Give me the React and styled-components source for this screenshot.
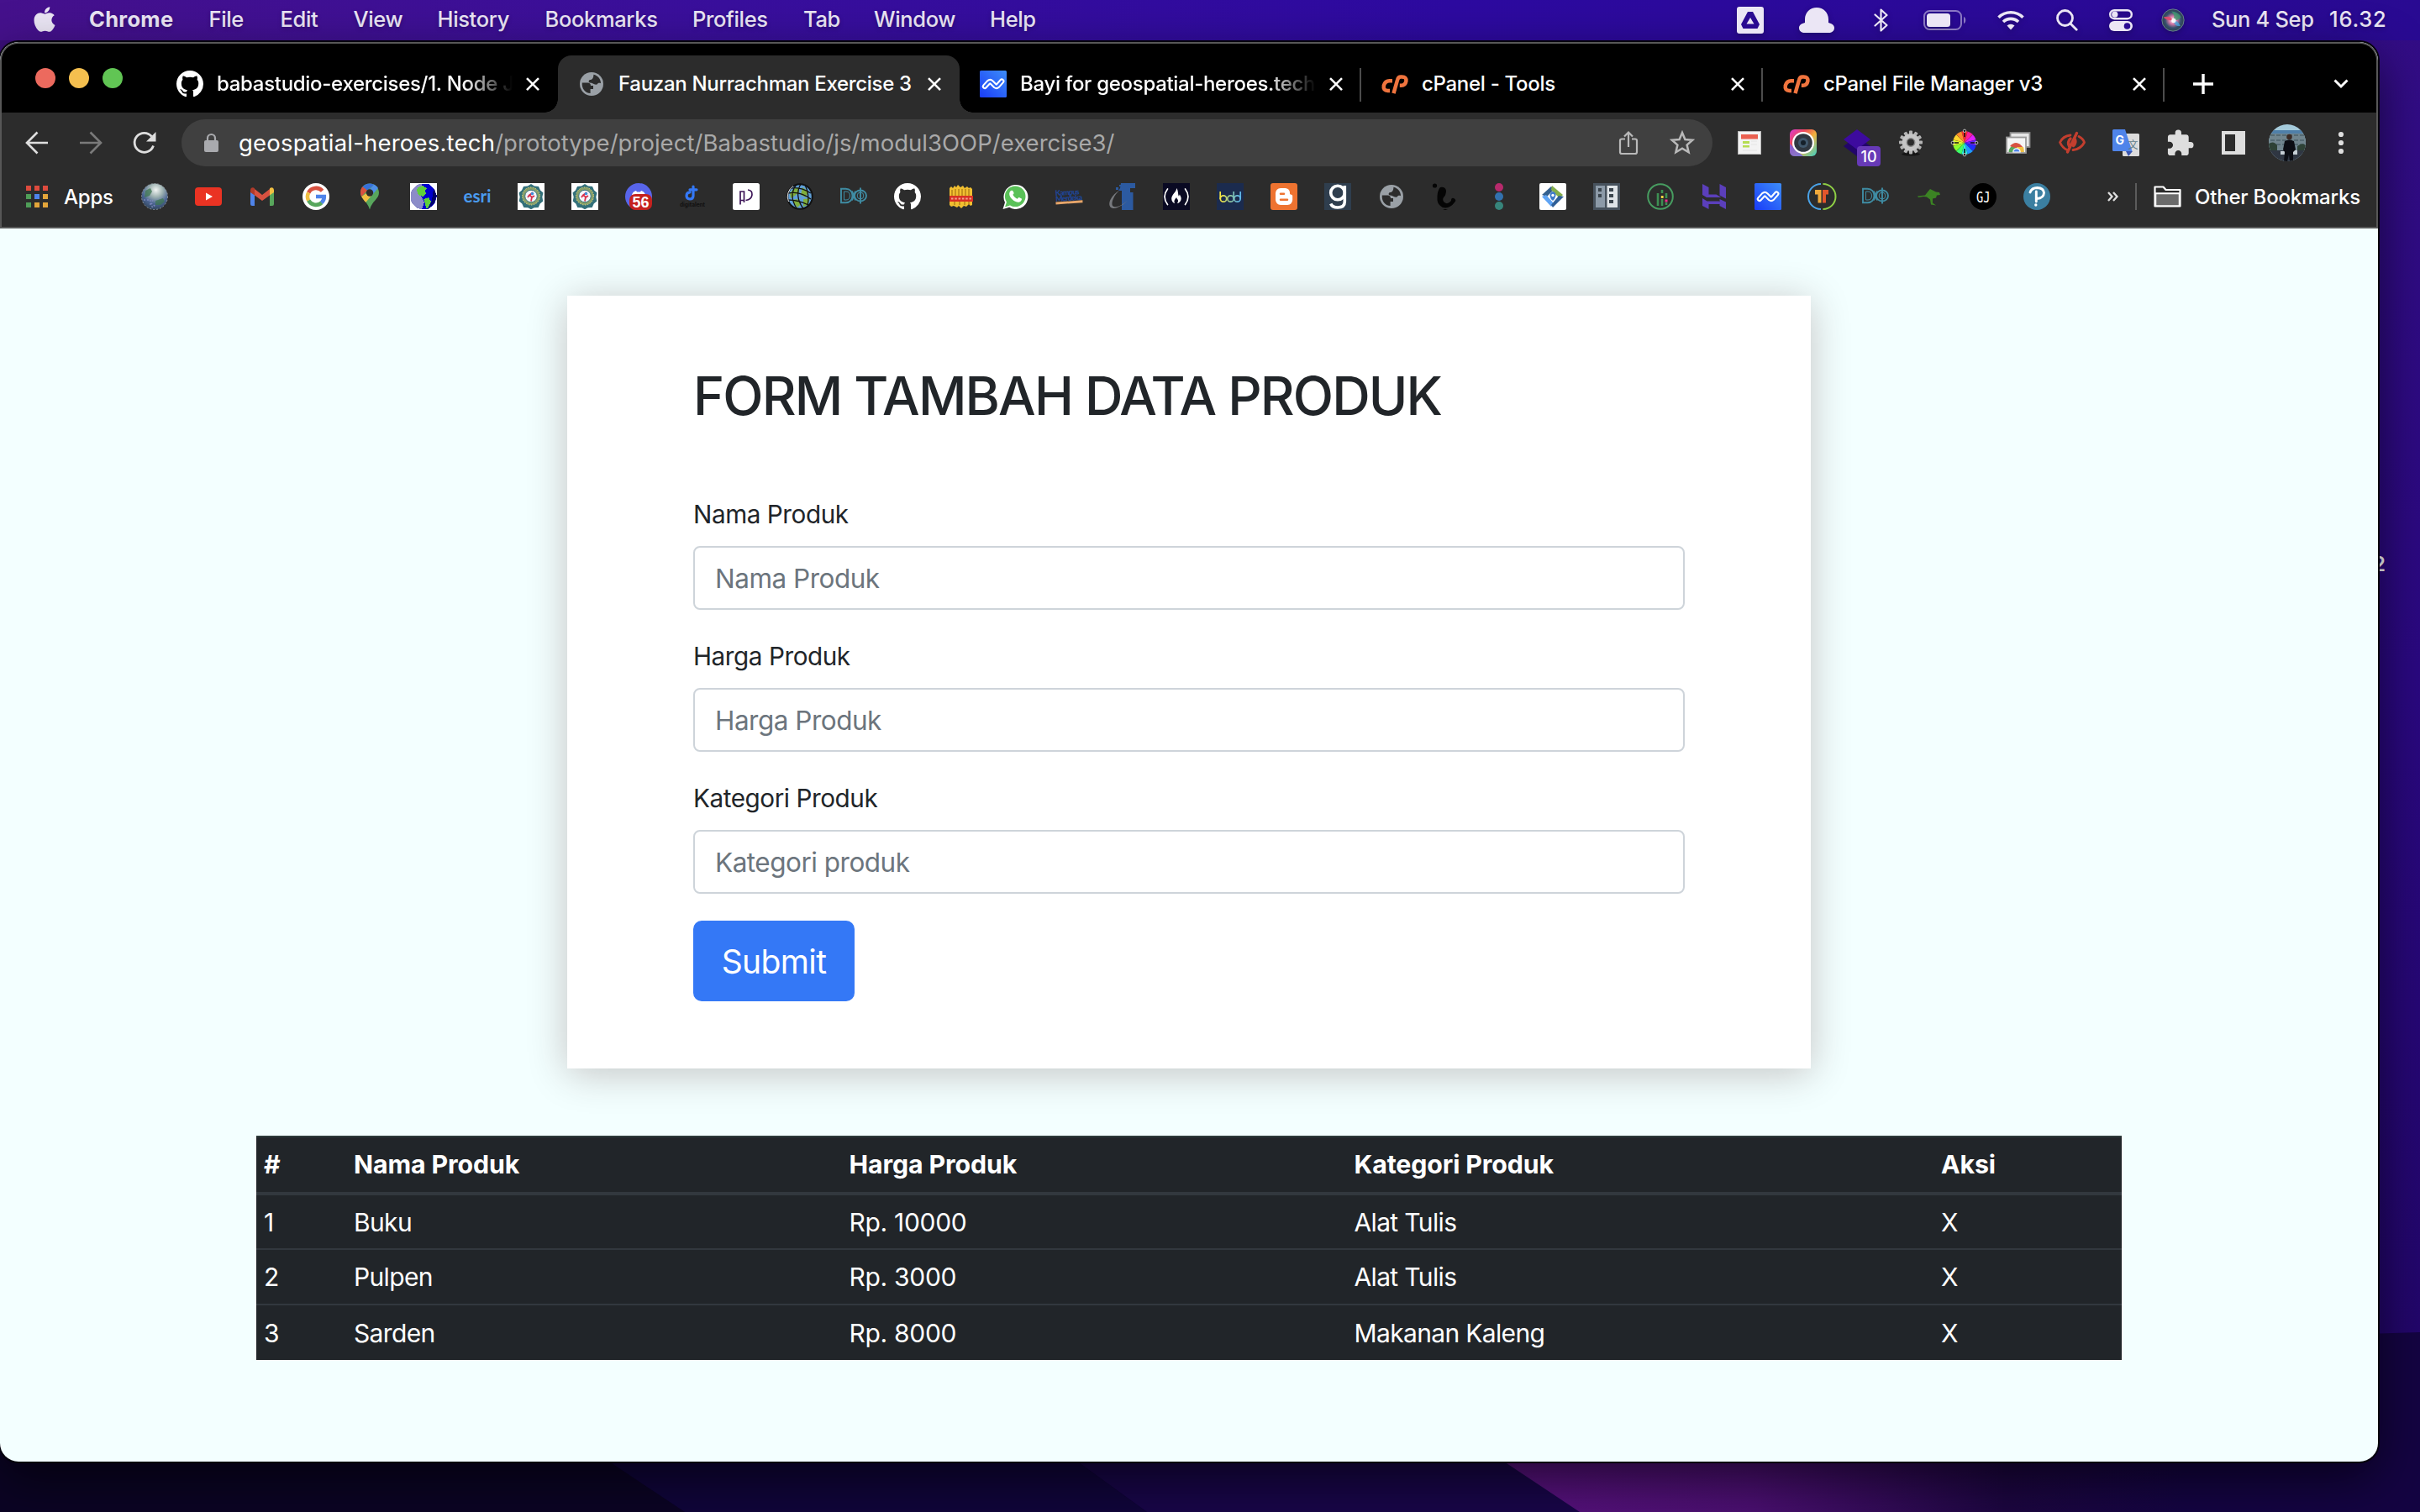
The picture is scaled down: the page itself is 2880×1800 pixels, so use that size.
import React from "react";
import styled, { createGlobalStyle, css } from "styled-components";
import { FaApple } from "react-icons/fa";
import { MdExtension } from "react-icons/md";

const GlobalStyle = createGlobalStyle`
  *, *::before, *::after { box-sizing: border-box; }
  body {
    margin: 0;
    background: #08021a;
    font-family: Inter, "Liberation Sans", sans-serif;
  }
  svg { display: block; overflow: visible; }
`;

/* ---------- desktop ---------- */

const Desktop = styled.div`
  position: relative;
  isolation: isolate;
  display: flex;
  flex-direction: column;
  width: 2880px;
  height: 1800px;
  overflow: hidden;
`;

const Wallpaper = styled.svg`
  position: absolute;
  inset: 0;
  z-index: -2;
`;

const DesktopFileLabel = styled.span`
  position: absolute;
  z-index: -1;
  left: 2824px;
  top: 657px;
  font-size: 24px;
  font-weight: 600;
  color: #fff;
`;

/* ---------- menu bar ---------- */

const MenuBar = styled.header`
  display: flex;
  align-items: center;
  justify-content: space-between;
  height: 48px;
  padding: 0 37px 3px 39px;
  flex: none;
  color: #ebe6f5;
  background: linear-gradient(90deg, #45118c 0%, #390f9c 30%, #2d0aa0 60%, #290a92 100%);
  font-size: 25.5px;
  font-weight: 500;
`;

const MenuGroup = styled.nav`
  display: flex;
  align-items: center;
  height: 100%;
`;

const AppleLogo = styled(FaApple)`
  width: 28px;
  height: 34px;
  margin-right: 39px;
`;

const MenuItem = styled.span`
  width: ${(p) => p.$w}px;
  white-space: pre;
  letter-spacing: ${(p) => p.$ls ?? -0.35}px;
  font-weight: ${(p) => (p.$app ? 700 : 500)};
  text-shadow: 0 2px 5px rgba(0, 0, 0, 0.25);
`;

const StatusSlot = styled.span`
  display: flex;
  width: ${(p) => p.$w}px;
  padding-top: 3px;
  filter: drop-shadow(0 2px 3px rgba(0, 0, 0, 0.25));
`;

/* ---------- browser window ---------- */

const Window = styled.main`
  display: flex;
  flex-direction: column;
  width: 2830px;
  height: 1690px;
  margin-top: 2px;
  flex: none;
  border-radius: 22px;
  overflow: hidden;
  background: #f3ffff;
  box-shadow: 0 0 0 2px #05020c, 0 20px 60px rgba(0, 0, 0, 0.6);
`;

const BrowserChrome = styled.div`
  display: flex;
  flex-direction: column;
  flex: none;
  height: 222px;
  border: 2px solid #575757;
  border-radius: 22px 22px 0 0;
  background: #2c2c2c;
  overflow: hidden;
`;

const TabStrip = styled.div`
  display: flex;
  align-items: center;
  height: 82px;
  flex: none;
  padding-left: 40px;
  background: #000;
`;

const TrafficLights = styled.div`
  display: flex;
  gap: 16px;
  width: 144px;
`;

const Light = styled.i`
  width: 24px;
  height: 24px;
  border-radius: 50%;
  background: ${(p) => p.$color};
`;

const flare = css`
  content: "";
  position: absolute;
  bottom: 0;
  width: 16px;
  height: 16px;
`;

const Tab = styled.div`
  position: relative;
  display: flex;
  align-items: center;
  align-self: flex-end;
  width: 478px;
  height: 68px;
  padding: 0 22px 0 24px;
  color: #fff;
  ${(p) =>
    p.$active &&
    css`
      background: #2c2c2c;
      border-radius: 16px 16px 0 0;
      &::before {
        ${flare}
        left: -16px;
        background: radial-gradient(circle at 0 0, transparent 15.5px, #2c2c2c 16px);
      }
      &::after {
        ${flare}
        right: -16px;
        background: radial-gradient(circle at 100% 0, transparent 15.5px, #2c2c2c 16px);
      }
    `}
`;

const TabTitle = styled.span`
  flex: 1;
  min-width: 0;
  margin: 0 8px 0 16px;
  white-space: nowrap;
  font-size: 24px;
  line-height: 32px;
  font-weight: 500;
  letter-spacing: -0.3px;
  ${(p) => p.$fade && "mask-image: linear-gradient(90deg, #000 calc(100% - 66px), transparent calc(100% - 8px));"}
`;

const TabDivider = styled.i`
  align-self: flex-end;
  width: 2px;
  height: 40px;
  margin: 0 0 13px -2px;
  background: #4c4c4c;
`;

const NewTab = styled.span`
  margin-left: 34px;
`;

const TabSearch = styled.span`
  margin-left: auto;
  margin-right: 33px;
`;

const StripIcon = styled.div`
  display: flex;
  flex: 1;
  align-items: center;
  padding-top: 14px;
`;

const Toolbar = styled.div`
  display: flex;
  align-items: center;
  height: 72px;
  flex: none;
  padding: 0 10px;
`;

const Cell = styled.span`
  position: relative;
  display: flex;
  justify-content: center;
  width: 64px;
  flex: none;
`;

const AddressBar = styled.div`
  display: flex;
  align-items: center;
  flex: 1;
  height: 56px;
  margin: 0 12px;
  padding: 0 21px 0 27px;
  border-radius: 28px;
  background: #404040;
  color: #a9a9a9;
  font-size: 27.5px;
`;

const Url = styled.span`
  flex: 1;
  margin-left: 24px;
  white-space: nowrap;
  letter-spacing: 0.03px;
`;

const UrlHost = styled.span`
  color: #fff;
  letter-spacing: 0.2px;
`;

const AddressActions = styled.div`
  display: flex;
  align-items: center;
  gap: 38px;
`;

const Badge = styled.span`
  position: absolute;
  left: 32px;
  top: 20px;
  width: 28px;
  height: 24px;
  border-radius: 4px;
  background: #673ab7;
  color: #fff;
  font-size: 18px;
  line-height: 25px;
  font-weight: 500;
  text-align: center;
`;

const BookmarkBar = styled.div`
  display: flex;
  align-items: center;
  height: 56px;
  flex: none;
  padding-left: 29px;
  color: #fff;
  font-size: 24px;
  font-weight: 500;
`;

const AppsLabel = styled.span`
  width: 76px;
  margin-left: 19px;
  letter-spacing: -0.2px;
`;

const MoreBookmarks = styled.span`
  width: 76px;
  padding-left: 52px;
`;

const BarDivider = styled.i`
  width: 2px;
  height: 32px;
  margin: 0 20px 0 9px;
  background: #5b5b5b;
`;

const FolderLabel = styled.span`
  margin-left: 16px;
  white-space: nowrap;
  letter-spacing: -0.2px;
`;

/* ---------- page ---------- */

const Page = styled.div`
  display: flex;
  flex-direction: column;
  align-items: center;
  padding-top: 80px;
  gap: 80px;
  color: #212529;
`;

const FormCard = styled.form`
  display: flex;
  flex-direction: column;
  align-items: flex-start;
  width: 1480px;
  height: 920px;
  padding: 80px 150px;
  background: #fff;
  box-shadow: 0 6px 44px rgba(44, 8, 8, 0.24);
`;

const FormTitle = styled.h2`
  margin: 0 0 79px;
  font-size: 63px;
  line-height: 78px;
  font-weight: 500;
  letter-spacing: -1.85px;
  white-space: nowrap;
`;

const Field = styled.div`
  display: flex;
  flex-direction: column;
  width: 100%;
  gap: 15px;
  margin-bottom: 32px;
`;

const Label = styled.label`
  padding-top: 1px;
  font-size: 29.7px;
  line-height: 45px;
  letter-spacing: -0.45px;
`;

const Input = styled.input`
  width: 100%;
  height: 76px;
  padding: 0 24px;
  border: 2px solid #ced4da;
  border-radius: 8px;
  background: #fff;
  font: 400 31.5px Inter, "Liberation Sans", sans-serif;
  letter-spacing: -0.5px;
  &::placeholder {
    color: #6c757d;
    opacity: 1;
  }
`;

const SubmitButton = styled.button`
  width: 192px;
  height: 96px;
  flex: none;
  padding: 1px 0 0;
  border: 0;
  border-radius: 10px;
  background: #3478f6;
  color: #fff;
  font: 400 39px/96px Inter, "Liberation Sans", sans-serif;
  letter-spacing: -0.6px;
`;

const ProductTable = styled.table`
  width: 2220px;
  table-layout: fixed;
  border-collapse: collapse;
  background: #212529;
  color: #fff;
  font-size: 30px;
  text-align: left;
`;

const Column = styled.col`
  width: ${(p) => p.$w}px;
`;

const HeadCell = styled.th`
  height: 68px;
  padding: 0 9px 1px;
  line-height: 47px;
  font-weight: 700;
  font-size: 30.3px;
  letter-spacing: -0.12px;
  border-top: 2px solid #2c3a39;
`;

const BodyCell = styled.td`
  height: 66px;
  padding: 0 9px;
  line-height: 48px;
  letter-spacing: ${(p) => (p.$numeric ? -0.3 : -0.65)}px;
  border-top: ${(p) => (p.$first ? 4 : 2)}px solid #32383e;
`;

/* ---------- icons ---------- */

const Svg = ({ s = 32, w, h, vb = "0 0 32 32", children, ...rest }) => (
  <svg width={w ?? s} height={h ?? s} viewBox={vb} fill="none" {...rest}>
    {children}
  </svg>
);

const GithubMark = () => (
  <Svg vb="0 0 16 16">
    <path
      fill="#fff"
      d="M8 0C3.58 0 0 3.58 0 8c0 3.54 2.29 6.53 5.47 7.59.4.07.55-.17.55-.38 0-.19-.01-.82-.01-1.49-2.01.37-2.53-.49-2.69-.94-.09-.23-.48-.94-.82-1.13-.28-.15-.68-.52-.01-.53.63-.01 1.08.58 1.23.82.72 1.21 1.87.87 2.33.66.07-.52.28-.87.51-1.07-1.78-.2-3.64-.89-3.64-3.95 0-.87.31-1.59.82-2.15-.08-.2-.36-1.02.08-2.12 0 0 .67-.21 2.2.82.64-.18 1.32-.27 2-.27.68 0 1.36.09 2 .27 1.53-1.04 2.2-.82 2.2-.82.44 1.1.16 1.92.08 2.12.51.56.82 1.27.82 2.15 0 3.07-1.87 3.75-3.65 3.95.29.25.54.73.54 1.48 0 1.07-.01 1.93-.01 2.2 0 .21.15.46.55.38A8.013 8.013 0 0 0 16 8c0-4.42-3.58-8-8-8z"
    />
  </Svg>
);

const DefaultFavicon = () => (
  <Svg>
    <circle cx="16" cy="16" r="14" fill="#9aa0a6" />
    <path fill="#2c2c2c" d="M4.800 14.500h6.700c2.200 0 3.500 1.400 3.500 3.600h3v3.800h-3.400v5.200C8.200 26.800 4.200 21.500 4.800 14.500z" />
    <path fill="#2c2c2c" d="M18.400 4.800c5.200 1.200 8.600 5.600 8.700 10.400-2-1-3.800-.4-4.500 1.300-3.800.8-5.200-1.800-8.600-1.900-1.700 0-1.900-3.200.2-3.500 2.900-.2 4.200-2.500 4.200-6.300z" />
  </Svg>
);

const Cpanel = () => (
  <Svg stroke="#f0743e" strokeWidth="4.500">
    <path d="M13 12.300H9.500q-5 0-6.700 5.500-1 6.200 4.700 6.200h2.500" />
    <path d="M14.500 27.200l4.600-16.200q.9-3.600 3.900-3.600h1.500q5.500.1 4.900 5.100-1 5.200-5.600 5.200h-2" />
  </Svg>
);

const Hostinger = ({ id }) => (
  <Svg>
    <defs>
      <linearGradient id={id} x1="0" y1="1" x2="1" y2="0">
        <stop offset="0" stopColor="#1a3cf8" />
        <stop offset="1" stopColor="#3d8df8" />
      </linearGradient>
    </defs>
    <rect width="32" height="32" rx="1.500" fill={`url(#${id})`} />
    <path
      d="M6 18.800l4.600-5q1.800-1.500 3.500.2l4.500 4.500q1.400 1 2.800-.3l4.800-5.500"
      stroke="#fff"
      strokeWidth="6.400"
      strokeLinecap="round"
      strokeLinejoin="round"
    />
    <path
      d="M6 18.800l4.600-5q1.800-1.500 3.500.2l4.500 4.500q1.400 1 2.800-.3l4.800-5.500"
      stroke="#2b66f8"
      strokeWidth="2.300"
      strokeLinecap="round"
      strokeLinejoin="round"
    />
  </Svg>
);

const CloseIcon = () => (
  <Svg s={16} vb="0 0 16 16">
    <path d="M1 1.200l14 14M15 1.200l-14 14" stroke="#fff" strokeWidth="2.600" />
  </Svg>
);

const Seal = () => (
  <Svg>
    <rect width="32" height="32" fill="#fff" />
    <path
      fill="#33707a"
      d="M16 1l4 2.500 5 .5 2 4.500 3.500 3-1.200 5 1 5-3.600 3-2 4.500-5 .2-3.700 2-3.700-2-5-.2-2-4.500-3.600-3 1-5L1.500 11.500 5 8.500 7 4l5-.5z"
    />
    <circle cx="16" cy="15.500" r="10.500" fill="#8aa06a" />
    <circle cx="16" cy="15.500" r="10.500" stroke="#e6dc7a" strokeWidth="1" strokeDasharray="1.500 1.500" />
    <circle cx="16" cy="15.500" r="7.300" fill="#f4f6fb" stroke="#33707a" />
    <path d="M18 11l-4 3.500 3 2-1 5M14 14l-2 3M17 17l3-2" stroke="#d8304c" strokeWidth="1.800" />
    <circle cx="17.500" cy="12.500" r="1.800" fill="#3f8fdc" />
  </Svg>
);

const DPhi = () => (
  <Svg stroke="#3f8ca3" strokeWidth="1.900">
    <path d="M1 6.800h5.500c5 0 8 3.700 8 8.200s-3 8.200-8 8.200H1z" />
    <path d="M4.500 10h2.500c3 0 4.500 2 4.500 5s-1.500 5-4.500 5H4.500z" strokeWidth="1" />
    <ellipse cx="24" cy="15" rx="7" ry="6.500" />
    <ellipse cx="24" cy="15" rx="3.800" ry="4" strokeWidth="1" />
    <path d="M24 5.500v19M18 9.500l-4 11M14 9.500l4 11" />
  </Svg>
);

const bookmarkIcons = [
  <Svg>
    <defs>
      <radialGradient id="marble" cx=".55" cy=".25" r=".75">
        <stop offset="0" stopColor="#f2f5f3" />
        <stop offset=".35" stopColor="#9fb3b2" />
        <stop offset=".7" stopColor="#4a6492" />
        <stop offset="1" stopColor="#33475f" />
      </radialGradient>
    </defs>
    <circle cx="16" cy="16" r="15.500" fill="url(#marble)" stroke="#8a9096" strokeDasharray="2 2" />
    <path d="M5 9l6-3 2 4-3 5-6 2zM17 21l9-3 2 4-5 4h-6z" fill="#3d7551" opacity=".75" />
    <path d="M3 20h8v6l4 4M14 20l-2 4 5 4" stroke="#7b85b8" strokeWidth="1.500" strokeDasharray="2 2" />
  </Svg>,
  <Svg>
    <rect y="5" width="32" height="22" rx="4" fill="#ea3323" />
    <path d="M13 11.500l8 4.500-8 4.500z" fill="#fff" />
  </Svg>,
  <Svg>
    <path d="M2 10l5 4v13H4q-2 0-2-2z" fill="#4f84ea" />
    <path d="M30 10l-5 4v13h3q2 0 2-2z" fill="#58a65c" />
    <path d="M7 7l9 7 9-7v7.500L16 21l-9-6.500z" fill="#d85140" />
    <path d="M2 8.500C2 5.200 5 4.200 7 6.200v8.300L2 11z" fill="#b03a2a" />
    <path d="M30 8.500c0-3.300-3-4.300-5-2.300v8.300l5-3.500z" fill="#f1bf42" />
  </Svg>,
  <Svg>
    <circle cx="16" cy="16" r="16" fill="#fff" />
    <g strokeWidth="4.600">
      <path d="M23.600 9.200A10 10 0 0 0 7.200 11.400" stroke="#d85140" />
      <path d="M7.200 11.300a10 10 0 0 0 0 9.400" stroke="#f1bf42" />
      <path d="M7.200 20.600a10 10 0 0 0 15.600 2.600" stroke="#58a65c" />
      <path d="M22.600 23.400A10 10 0 0 0 25.800 16H16" stroke="#4f84ea" />
    </g>
  </Svg>,
  <Svg>
    <path d="M16 .5C9.800.5 5 5.300 5 11.500c0 7 8.300 10 11 20 2.700-10 11-13 11-20C27 5.300 22.200.5 16 .5z" fill="#58a65c" />
    <path d="M16 .5c-3.400 0-6.500 1.400-8.500 3.800l5.500 4.500L21.500 2C20 1 18 .5 16 .5z" fill="#3871d8" />
    <path d="M21 1.800l-9 10.400 7.500 1.300 6.400-7.500C24.800 4 23.200 2.600 21 1.800z" fill="#4f8fe8" />
    <path d="M7.500 4.300C5.800 6.300 5 8.600 5 11.200c0 1.800.5 3.400 1.200 4.800l7-7.200z" fill="#d85140" />
    <path d="M6.200 16c1.200 2.500 3.200 4.600 5 7l8-9.500-7-1.500z" fill="#f1bf42" />
    <circle cx="16" cy="11.500" r="4.200" fill="#2c2c2c" />
  </Svg>,
  <Svg shapeRendering="crispEdges">
    <rect width="32" height="32" fill="#fff" />
    <circle cx="16" cy="16" r="15.500" fill="#8c8cc8" />
    <path d="M14 1h8l7 6 3 9-3 9-8 6h-7l3-8-4-8z" fill="#0000cd" />
    <path d="M28 6l4 9-3 9-8 7 5-10z" fill="#00006e" />
    <path d="M9 5l6-2 5 3-2 3 1 4-4 3-5-2-2-5zM16 19l6-2 3 5-4 8h-2l-1-6z" fill="#5fd03a" />
  </Svg>,
  <Svg>
    <text x="-.5" y="22.500" fontSize="20.500" fontWeight="700" fill="#4a9bf0" textLength="33" lengthAdjust="spacingAndGlyphs" fontFamily="Lato, sans-serif">esri</text>
  </Svg>,
  <Seal />,
  <Seal />,
  <Svg>
    <circle cx="16" cy="16" r="16" fill="#5865ea" />
    <path d="M8 14q1-4 5-5l1 1.500h4L19 9q4 1 5 5z" fill="#fff" />
    <rect x="5" y="13" width="27" height="19" rx="7" fill="#c5221f" />
    <text x="18.500" y="29" textAnchor="middle" fontSize="18" fontWeight="700" fill="#fff" fontFamily="Liberation Sans, sans-serif">56</text>
  </Svg>,
  <Svg>
    <path d="M17 4v11q0 4-4 4-4-.3-4-4 .2-4 4-4.200M13 7.800h8" stroke="#3478f6" strokeWidth="3.200" strokeLinecap="round" />
    <text x="1" y="28" fontSize="7" textLength="30" lengthAdjust="spacingAndGlyphs" fill="#111" fontWeight="700" fontFamily="Inter, sans-serif">digitalent</text>
  </Svg>,
  <Svg>
    <rect width="32" height="32" rx="2.500" fill="#fff" />
    <path d="M9 10v15.500M9 20.500h4.500V10H9zM13.500 10v13M18 8q5.500.5 5 6-.6 5.500-7.500 6.500" stroke="#3c1457" strokeWidth="1.700" />
  </Svg>,
  <Svg>
    <circle cx="16" cy="16" r="15" fill="#5f9fd8" />
    <path d="M4 12q5-7 10-7l1 6-5 4-5 3zM19 5l7 5-3 7-6-3zM6 20l7-1 4 6-4 4zM20 19l8-1-3 8-5 2z" fill="#7fae3c" />
    <path d="M2 12q14-3 27 7M2 20q12 0 24 6M6 6q10-2 23 6M12 1.500Q2 14 12 30M17 1Q9 15 20 30.500M22 2q6 12 3 26" stroke="#111" strokeWidth="1.300" />
    <circle cx="16" cy="16" r="14.800" stroke="#111" strokeWidth="2" />
    <path d="M2.500 22A15 15 0 0 1 8 3.500" stroke="#e8e8e8" strokeWidth="1" />
  </Svg>,
  <DPhi />,
  <GithubMark />,
  <Svg>
    <path d="M2 6l2-2 2 2 2-3 2 2 2-3 3 3 3-2 2 3 3-2 2 2 2-1 2 2v19l-2 1-2-2-3 3-3-1-3 3-3-3-2 2-4-2-3 1-2-2z" fill="#f1bf30" />
    <path d="M5 8v7M9 7v8M13 7v8M17 7v8M21 7v8M25 7v8M8 22v4M14 22v4M20 22v4M25 22v4" stroke="#a87414" strokeWidth="1.200" />
    <rect x="2" y="15" width="28" height="7" fill="#d93025" />
    <path d="M4 18.500h24" stroke="#f4a08c" strokeWidth="1.800" strokeDasharray="2.500 1.800" />
  </Svg>,
  <Svg>
    <path d="M1.500 31L4 23A14.500 14.500 0 1 1 9.200 28.700z" fill="#fff" />
    <circle cx="16.200" cy="15.800" r="12.300" fill="#5ac158" />
    <path d="M4 28.500l2-6 4 4z" fill="#5ac158" />
    <path d="M11.700 8.800c1.500-.5 1.900.3 2.900 3 .2.900-1.300 1.800-1.100 2.300 1.200 2.300 2.800 3.700 5 4.600.7.200 1.500-1.900 2.300-1.700l3 1.600c.7.700-.6 4-3.600 4.200-5.300 0-11.300-6.200-11-10.400.1-1.700 1.200-3.100 2.500-3.600z" fill="#fff" />
  </Svg>,
  <Svg>
    <g transform="rotate(-4 16 16)" fill="#1f4596" fontFamily="Lato, sans-serif" fontWeight="900">
      <text x="0" y="14" fontSize="9" textLength="29">Kampus</text>
      <text x="0" y="21" fontSize="9" textLength="32">Merdeka</text>
      <rect x="0" y="21.500" width="32" height="2.800" fill="#e6a56a" />
    </g>
  </Svg>,
  <Svg>
    <path d="M14 0h17v6h-6v26H15V9h-4l2-3z" fill="#2c5aa0" />
    <path d="M24.500 11h4v21h-4z" fill="#2c5aa0" />
    <path d="M12 9C4 13-3 24 2 29c5 4 18-4 26-15C20 25 8 31 4 27 2 23 6 14 12 9z" fill="#77797d" />
    <path d="M8 5h3v3H8zM12 2h2v2h-2z" fill="#2c5aa0" />
  </Svg>,
  <Svg>
    <rect width="32" height="32" fill="#0a0a23" />
    <path d="M5.500 7Q-1.500 16 5.500 25.500M26.500 7q7 9 0 18.500" stroke="#fff" strokeWidth="1.700" strokeLinecap="round" />
    <path d="M16 6c1 3.500-5.800 7.500-5.800 12.500 0 3 1.800 5 4 5.700-1.700-2.700 0-5.300 2-7.200.1 2 1.800 2 1.800 3.800 0 1.500-.4 2.500-1.200 3.400 3-.8 5-3 4.900-6-.1-2.200-1.500-3.400-1.700-4.700-.8.600-.7 1.700-.9 2.300C17.600 14 18.600 8.500 16 6z" fill="#fff" />
  </Svg>,
  <Svg>
    <defs>
      <linearGradient id="bdd" gradientUnits="userSpaceOnUse" x1="3" x2="29" y1="0" y2="0">
        <stop offset=".1" stopColor="#f5e642" />
        <stop offset=".5" stopColor="#8fc49b" />
        <stop offset=".9" stopColor="#5fb8e8" />
      </linearGradient>
    </defs>
    <rect width="32" height="32" fill="#1b2b4e" />
    <g stroke="url(#bdd)" strokeWidth="1.700">
      <circle cx="8" cy="18.500" r="3.700" />
      <circle cx="16.500" cy="18.500" r="3.700" />
      <circle cx="24.500" cy="18.500" r="3.700" />
      <path d="M4.200 10v8.500l.1.500M20.200 10v8.500l-.1.500M28.200 10v8.500l-.1.500" />
    </g>
  </Svg>,
  <Svg>
    <rect width="32" height="32" rx="3" fill="#ee7330" />
    <path fillRule="evenodd" d="M12 6h5.500q5 .5 5.500 5v1.500q.3 1.200 2 1.200 1.200.2 1.200 1.500V20q-.4 5.500-6 6h-8q-5.700-.5-6.200-6v-8q.5-5.500 6-6zm0 5.500a1 1 0 0 0 0 2.500h4a1 1 0 0 0 0-2.500zm0 7a1 1 0 0 0 0 2.500h8a1 1 0 0 0 0-2.500z" fill="#fff" />
  </Svg>,
  <Svg>
    <rect width="32" height="32" fill="#2f3e4e" />
    <circle cx="16" cy="11.500" r="8.300" stroke="#fff" strokeWidth="3.600" />
    <path d="M24.300 3v19c0 5-3 7-8.300 7-4 0-7-1.300-8.300-4.500" stroke="#fff" strokeWidth="3.600" />
  </Svg>,
  <DefaultFavicon />,
  <Svg fill="#050505">
    <circle cx="3.500" cy="3" r="2.600" />
    <path d="M10 5q6-1 7 4 0 5-3 8-2 3 1 6 4 3 8-2 0-4 3-3 4 2 1 5-6 8-14 6-6-3-6.500-9-.5-11 3.500-15zM13 31h6l-3 1z" />
  </Svg>,
  <Svg>
    <circle cx="16" cy="5" r="5" fill="#b72a6c" />
    <circle cx="16" cy="16" r="5" fill="#3271ae" />
    <circle cx="16" cy="27" r="5" fill="#37857b" />
  </Svg>,
  <Svg>
    <rect width="32" height="32" rx="2" fill="#fff" />
    <path d="M3 14L14 4l4 3-9 9z" fill="#34608f" />
    <path d="M15 3l13 11-4 4-10-10z" fill="#84ad4a" />
    <path d="M3 16l5-2 9 10-3 4z" fill="#5fa4f4" />
    <path d="M29 16l-13 13-2-3 9-11z" fill="#2f5f97" />
    <path d="M16 10q4 1 3.500 5-1 4-3.500 6-3-2-3.500-6 0-4 3.500-5z" fill="#3b78c8" />
    <circle cx="16" cy="14.500" r="1.700" fill="#fff" />
  </Svg>,
  <Svg>
    <rect width="32" height="32" fill="#47525d" />
    <rect x="3" y="3" width="11" height="26" fill="#8c9aa8" />
    <rect x="16.500" y="3" width="12.500" height="26" fill="#dfe4e8" />
    <path d="M6 6h4v4H6zM6 13h4v4H6zM19 6h5v4h-5zM19 13h5v4h-5zM19 20h5v4h-5z" fill="#3b454e" />
  </Svg>,
  <Svg>
    <circle cx="16" cy="16" r="14.800" stroke="#479c60" strokeWidth="2" />
    <path d="M13 12v15M18 8v4M18 19v8M23 12v6M23 23v3" stroke="#3d8f53" strokeWidth="2.600" />
    <path d="M16.800 15h2.800v3h-2.800z" fill="#f6d743" />
    <path d="M21.500 19.500h3v3h-3z" fill="#ee2d8a" />
  </Svg>,
  <Svg fill="#5b3fbb">
    <path d="M2 1l7.500 4v8.500h9l6 3.500H7l-5-3zM22.500 1l7.500 4v13.500l-7.500-4zM2 18l5.500 3.500h14L27 25H9.500v6L2 27zM22.500 19L30 22.500V31l-7.500-4z" />
  </Svg>,
  <Hostinger id="host-b" />,
  <Svg>
    <path d="M15 1A15 15 0 0 0 15 31" stroke="#4aa3e8" strokeWidth="2" />
    <path d="M17.500 1a15 15 0 0 1 0 30" stroke="#8fcf45" strokeWidth="2" />
    <path d="M8 8h7.500v15.500h-4v-10H8z" fill="#f1a93b" />
    <path d="M17 8h7v5.500h-3v10h-4z" fill="#e2562c" />
  </Svg>,
  <DPhi />,
  <Svg>
    <path d="M2 15.500l9-1 3-4 3-3.500 4 2 3 1.500 4 .5 1 3-4 .5-1 3-4 1v5l4 3-6-1-1-6-4-3-4-.5-6 1z" fill="#3b8323" />
  </Svg>,
  <Svg>
    <circle cx="16" cy="16" r="16" fill="#000" />
    <text x="8" y="22.500" fontSize="18" textLength="16.500" lengthAdjust="spacingAndGlyphs" fill="#fff" fontFamily="DejaVu Sans Mono, monospace">GJ</text>
  </Svg>,
  <Svg>
    <circle cx="16" cy="16" r="16" fill="#3b7fa1" />
    <path d="M8 11q2-5.500 8.500-5.500 7.500.3 8 6-.3 6.500-8.500 7M15.300 10v12" stroke="#fff" strokeWidth="2.900" strokeLinecap="round" />
    <circle cx="14.800" cy="26" r="1.700" fill="#fff" />
  </Svg>,
];

const hues = ["#ff2d2d", "#ff1f9a", "#e01fff", "#6a1fff", "#1f2dff", "#1f9aff", "#2df0e0", "#3cff6a", "#8cff2d", "#e0ff2d", "#ffd52d", "#ff8a2d"];
const gearTeeth = Array.from({ length: 12 }, (_, i) => i * 30);

const extensionIcons = [
  <Svg>
    <rect x="2.500" y="2.500" width="27" height="27" fill="#f3f3f3" stroke="#b9b9b9" />
    <rect x="6" y="6" width="20" height="5.500" fill="#ea6050" />
    <path d="M8 14h8v3H8zM8 19h8v2.500H8z" fill="#b5dd52" />
    <path d="M18 14h7M18 18h7M8 25h17" stroke="#e4e4e4" />
  </Svg>,
  <Svg>
    <defs>
      <linearGradient id="cam" x1="0" y1="0" x2="1" y2="1">
        <stop offset="0" stopColor="#d83ad8" />
        <stop offset=".3" stopColor="#ee4a5a" />
        <stop offset=".55" stopColor="#f2b23c" />
        <stop offset="1" stopColor="#3bd1c6" />
      </linearGradient>
    </defs>
    <rect width="32" height="32" rx="6" fill="url(#cam)" />
    <path d="M0 17v9q0 6 6 6h10z" fill="#6a5cf5" opacity=".75" />
    <circle cx="16" cy="16" r="13" fill="#fff" />
    <circle cx="16" cy="16" r="10.800" fill="#303841" />
    <circle cx="16" cy="16" r="6" fill="#41586c" />
    <circle cx="16" cy="16" r="3" fill="#15202a" />
  </Svg>,
  <Svg>
    <path d="M16 8l16 12-16 12L0 20z" fill="#22056a" />
    <path d="M16 0l16 12-16 12L0 12z" fill="#3d0b9e" />
  </Svg>,
  <Svg>
    <ellipse cx="16" cy="29.500" rx="11" ry="2" fill="#161616" />
    <g fill="#b4b4b4">
      {gearTeeth.map((a) => (
        <rect key={a} x="14" y="1.500" width="4" height="7" rx="1" transform={`rotate(${a} 16 15.500)`} />
      ))}
    </g>
    <circle cx="16" cy="15.500" r="7.700" stroke="#c6c6c6" strokeWidth="5.500" />
    <circle cx="16" cy="15.500" r="4.700" stroke="#8a8a8a" strokeWidth="1.500" />
  </Svg>,
  <Svg>
    {hues.map((c, i) => (
      <path key={c} d="M16 16L12.400 2.500A14 14 0 0 1 19.600 2.500z" fill={c} transform={`rotate(${i * 30} 16 16)`} />
    ))}
    <path d="M16 1v8M16 23v8M1 16h8M23 16h8" stroke="#111" strokeWidth="1.600" />
    <g stroke="#ddd" strokeWidth=".8" fill="#111">
      <circle cx="16" cy="1.800" r="1.700" />
      <circle cx="16" cy="30.200" r="1.700" />
      <circle cx="1.800" cy="16" r="1.700" />
      <circle cx="30.200" cy="16" r="1.700" />
    </g>
  </Svg>,
  <Svg>
    <rect x="6.500" y="4" width="23" height="17" fill="#e6e6e6" stroke="#8a8a8a" strokeWidth="1.800" />
    <rect x="2" y="9.500" width="23" height="18.500" fill="#f5f5f5" stroke="#9a9a9a" strokeWidth="1.800" />
    <path d="M4.500 27a9 9 0 0 1 18 0z" fill="#58a65c" />
    <path d="M6 20q8-9 16 2l-8 .5z" fill="#d85140" />
    <path d="M14 21h8q1 3 .5 6H15z" fill="#f1bf42" />
    <path d="M9.800 27a4.200 4.200 0 0 1 8.400 0z" fill="#4f84ea" stroke="#fff" strokeWidth="1.200" />
  </Svg>,
  <Svg stroke="#c33e2e" strokeWidth="2.800" strokeLinecap="round" strokeLinejoin="round">
    <path d="M14 7Q5 8 1.500 15.500 4.500 22 10 24.500M24 8.500q5 2.500 6.500 7Q26.500 23.500 17 24.500" />
    <path d="M21.500 4.500L10.500 27M14 11q-4 4-1.500 9M19.500 12q1.500 4-2 7.500" strokeWidth="3.400" />
  </Svg>,
  <Svg>
    <rect x="12" y="5" width="20" height="27" rx="1.500" fill="#dcdcdc" />
    <path d="M16 26h8l-5 6z" fill="#3a56b0" />
    <path d="M1.500 0H15l8.500 26H1.500Q0 26 0 24.500v-23Q0 0 1.500 0z" fill="#4f84ea" />
    <text x="3.500" y="18" fontSize="14" fontWeight="700" fill="#fff" fontFamily="Inter, sans-serif">G</text>
    <text x="18.500" y="23" fontSize="12" fill="#607d8b" fontFamily="Noto Sans CJK SC, sans-serif">文</text>
  </Svg>,
  <MdExtension size={35} color="#dedede" />,
  <Svg>
    <path fillRule="evenodd" d="M2 2h28v28H2zm4 4v20h12V6z" fill="#dedede" />
  </Svg>,
  <Svg s={44} vb="0 0 44 44">
    <defs>
      <clipPath id="face">
        <circle cx="22" cy="22" r="22" />
      </clipPath>
    </defs>
    <g clipPath="url(#face)">
      <rect width="44" height="44" fill="#a5cbdc" />
      <rect y="7" width="44" height="4" fill="#4f7fa8" />
      <rect y="11" width="44" height="21" fill="#70858e" />
      <path d="M2 13h40M2 19h40M2 24h40" stroke="#4c626b" strokeWidth="1.500" strokeDasharray="5 2" />
      <path d="M0 23q6-4 10 2v8H0zM34 26q6-5 10-1v9H34z" fill="#2e4236" />
      <rect y="31" width="44" height="13" fill="#2f3642" />
      <path d="M14 32h7v4h-7zM27 31h7v5h-7z" fill="#c5ced4" />
      <circle cx="24.500" cy="15" r="3.300" fill="#3a2a24" />
      <path d="M19 20q5-3 11 0l2 10-3 3v11h-4l-1-8-2 8h-4l1-11-2-3z" fill="#0b0d13" />
    </g>
  </Svg>,
  <Svg fill="#dedede">
    <circle cx="16" cy="6" r="3.100" />
    <circle cx="16" cy="16" r="3.100" />
    <circle cx="16" cy="26" r="3.100" />
  </Svg>,
];

/* ---------- data ---------- */

const menus = [
  { text: "Chrome", w: 142.5, app: true, ls: 0.3 },
  { text: "File", w: 85 },
  { text: "Edit", w: 87 },
  { text: "View", w: 100 },
  { text: "History", w: 128 },
  { text: "Bookmarks", w: 175.5 },
  { text: "Profiles", w: 132 },
  { text: "Tab", w: 84 },
  { text: "Window", w: 138 },
  { text: "Help", w: 80 },
];

const tabs = [
  { title: "babastudio-exercises/1. Node J", icon: <GithubMark />, fade: true },
  { title: "Fauzan Nurrachman Exercise 3", icon: <DefaultFavicon />, active: true },
  { title: "Bayi for geospatial-heroes.tech", icon: <Hostinger id="host-a" />, fade: true, divider: true },
  { title: "cPanel - Tools", icon: <Cpanel />, divider: true },
  { title: "cPanel File Manager v3", icon: <Cpanel />, divider: true },
];

const fields = [
  { label: "Nama Produk", placeholder: "Nama Produk" },
  { label: "Harga Produk", placeholder: "Harga Produk" },
  { label: "Kategori Produk", placeholder: "Kategori produk" },
];

const columns = [
  { title: "#", w: 107 },
  { title: "Nama Produk", w: 589.5 },
  { title: "Harga Produk", w: 601 },
  { title: "Kategori Produk", w: 698.5 },
  { title: "Aksi", w: 224 },
];

const products = [
  ["1", "Buku", "Rp. 10000", "Alat Tulis", "X"],
  ["2", "Pulpen", "Rp. 3000", "Alat Tulis", "X"],
  ["3", "Sarden", "Rp. 8000", "Makanan Kaleng", "X"],
];

const appDots = ["#dd4b3e", "#dd4b3e", "#dd4b3e", "#4f9e58", "#4f84ea", "#e3a53a", "#4f9e58", "#e3a53a", "#e3a53a"];

/* ---------- parts ---------- */

const StatusIcons = () => (
  <>
    <StatusSlot $w={74}>
      <Svg>
        <rect width="32" height="32" rx="3" fill="#ebe6f5" />
        <path fillRule="evenodd" d="M13 6h6l8 15-2.500 5h-17L5 21zm3 7l-4.500 7.500h9z" fill="#2a0a92" />
      </Svg>
    </StatusSlot>
    <StatusSlot $w={89}>
      <Svg w={42} h={30} vb="0 0 42 30">
        <path d="M21 0C13 0 7 6 7 14v4c-4 1-7 3-7 6 0 4 3 6 7 6h28c4 0 7-2 7-6 0-3-3-5-7-6v-4C35 6 29 0 21 0z" fill="#ebe6f5" />
      </Svg>
    </StatusSlot>
    <StatusSlot $w={59}>
      <Svg w={18} h={28} vb="0 0 18 28">
        <path d="M1.500 7.500l14 12.500-7 6.500V1.500l7 6.500-14 12.500" stroke="#ebe6f5" strokeWidth="2.200" strokeLinejoin="round" strokeLinecap="round" />
      </Svg>
    </StatusSlot>
    <StatusSlot $w={88}>
      <Svg w={52} h={24} vb="0 0 52 24">
        <rect x="1" y="1" width="44" height="22" rx="6.500" stroke="#ebe6f5" strokeOpacity=".5" strokeWidth="2" />
        <rect x="4" y="4" width="28" height="16" rx="3.500" fill="#ebe6f5" />
        <path d="M48 8c3 1 3 7 0 8z" fill="#ebe6f5" opacity=".5" />
      </Svg>
    </StatusSlot>
    <StatusSlot $w={70}>
      <Svg w={32} h={24} vb="0 0 32 24" stroke="#ebe6f5" strokeWidth="3.600">
        <path d="M1.500 8.800a20.500 20.500 0 0 1 29 0M7 14a13 13 0 0 1 18 0" />
        <path d="M16 23.500l-4.500-5a6.500 6.500 0 0 1 9 0z" fill="#ebe6f5" stroke="none" />
      </Svg>
    </StatusSlot>
    <StatusSlot $w={63}>
      <Svg w={26} h={26} vb="0 0 26 26" stroke="#ebe6f5" strokeWidth="2.800" strokeLinecap="round">
        <circle cx="10.500" cy="10.500" r="9" />
        <path d="M17.200 17.200l7 7" />
      </Svg>
    </StatusSlot>
    <StatusSlot $w={62}>
      <Svg w={28} h={26} vb="0 0 28 26">
        <rect x="1.200" y="1.200" width="25.600" height="10" rx="5" stroke="#ebe6f5" strokeWidth="2.400" />
        <circle cx="6.800" cy="6.200" r="3.600" fill="#ebe6f5" />
        <rect y="14" width="28" height="12" rx="6" fill="#ebe6f5" />
        <circle cx="21.500" cy="20" r="3.800" fill="#2a0a92" />
      </Svg>
    </StatusSlot>
    <StatusSlot $w={60}>
      <Svg s={28}>
        <defs>
          <radialGradient id="siri" cx=".5" cy=".5" r=".5">
            <stop offset="0" stopColor="#fff" />
            <stop offset=".35" stopColor="#d77aa8" />
            <stop offset=".7" stopColor="#35506e" />
            <stop offset="1" stopColor="#31424e" />
          </radialGradient>
        </defs>
        <circle cx="16" cy="16" r="15" fill="url(#siri)" stroke="#6d8a94" />
        <path d="M3 12q9-3 13 4-9 1-13-4z" fill="#e24a6a" opacity=".9" />
        <path d="M14 4q10 1 13 8-4 5-11 4 4-6-2-12z" fill="#3f9a6e" opacity=".8" />
        <path d="M16 16q7 0 10 8-8 1-10-8z" fill="#4aa8e0" opacity=".8" />
        <circle cx="17" cy="16.500" r="3" fill="#fff" opacity=".9" />
      </Svg>
    </StatusSlot>
  </>
);

export default function App() {
  return (
    <>
      <GlobalStyle />
      <Desktop>
        <Wallpaper width="2880" height="1800" viewBox="0 0 2880 1800">
          <defs>
            <linearGradient id="side" x1="0" y1="0" x2="0" y2="1">
              <stop offset="0" stopColor="#330d86" />
              <stop offset=".5" stopColor="#2a0880" />
              <stop offset="1" stopColor="#22066a" />
            </linearGradient>
            <linearGradient id="plum" x1="0" y1="0" x2="1" y2="0">
              <stop offset="0" stopColor="#5a1280" />
              <stop offset=".4" stopColor="#4a0f70" />
              <stop offset=".75" stopColor="#1c0640" />
              <stop offset="1" stopColor="#140442" />
            </linearGradient>
          </defs>
          <rect width="2880" height="1800" fill="#0d042c" />
          <rect width="1250" height="1800" fill="#0b0424" />
          <rect width="400" height="300" fill="#3a0f78" />
          <rect x="2600" width="280" height="1600" fill="url(#side)" />
          <path d="M2600 1595L2880 1586V1800H2600z" fill="#140442" />
          <path d="M695 1720L815 1800H1365L1255 1720z" fill="#10053a" />
          <path d="M1255 1720L1365 1800H1885L1760 1720z" fill="#180648" />
          <path d="M1745 1710L1880 1800H2600V1710z" fill="url(#plum)" />
        </Wallpaper>
        <DesktopFileLabel>2</DesktopFileLabel>

        <MenuBar>
          <MenuGroup>
            <AppleLogo />
            {menus.map((m) => (
              <MenuItem key={m.text} $w={m.w} $app={m.app} $ls={m.ls}>
                {m.text}
              </MenuItem>
            ))}
          </MenuGroup>
          <MenuGroup>
            <StatusIcons />
            <MenuItem $w={140}>Sun 4 Sep</MenuItem>
            <MenuItem $w={71} $ls={0.8}>16.32</MenuItem>
          </MenuGroup>
        </MenuBar>

        <Window>
          <BrowserChrome>
            <TabStrip>
              <TrafficLights>
                <Light $color="#ec6a5e" />
                <Light $color="#f4bf4f" />
                <Light $color="#61c554" />
              </TrafficLights>
              {tabs.map((t) => (
                <React.Fragment key={t.title}>
                  <Tab $active={t.active}>
                    {t.icon}
                    <TabTitle $fade={t.fade}>{t.title}</TabTitle>
                    <CloseIcon />
                  </Tab>
                  {t.divider && <TabDivider />}
                </React.Fragment>
              ))}
              <StripIcon>
                <NewTab>
                  <Svg s={24} vb="0 0 24 24">
                    <path d="M12 0v24M0 12h24" stroke="#fff" strokeWidth="3.400" />
                  </Svg>
                </NewTab>
                <TabSearch>
                  <Svg w={18} h={12} vb="0 0 18 12">
                    <path d="M1.500 1.500L9 9l7.500-7.500" stroke="#fff" strokeWidth="3" />
                  </Svg>
                </TabSearch>
              </StripIcon>
            </TabStrip>

            <Toolbar>
              <Cell>
                <Svg stroke="#dedede" strokeWidth="2.600">
                  <path d="M29 16H4.500M16.500 3.500L4 16l12.500 12.500" />
                </Svg>
              </Cell>
              <Cell>
                <Svg stroke="#7a7a7a" strokeWidth="2.600">
                  <path d="M3 16h24.500M15.500 3.500L28 16 15.500 28.500" />
                </Svg>
              </Cell>
              <Cell>
                <Svg>
                  <path d="M26.500 19.500A11.500 11.500 0 1 1 24.500 8.500" stroke="#dedede" strokeWidth="2.800" />
                  <path d="M29.500 3v11.500H18z" fill="#dedede" />
                </Svg>
              </Cell>
              <AddressBar>
                <Svg w={17} h={22} vb="0 0 17 22">
                  <rect y="8" width="17" height="14" rx="2" fill="#a9aaae" />
                  <path d="M4 9V5.500a4.500 4.500 0 0 1 9 0V9" stroke="#a9aaae" strokeWidth="2.200" />
                </Svg>
                <Url>
                  <UrlHost>geospatial-heroes.tech</UrlHost>/prototype/project/Babastudio/js/modul3OOP/exercise3/
                </Url>
                <AddressActions>
                  <Svg w={22} h={28} vb="0 0 22 28" stroke="#b9b9b9" strokeWidth="2.200">
                    <path d="M7 9.500H3q-2 0-2 2V25q0 2 2 2h16q2 0 2-2V11.500q0-2-2-2h-4M11 19V2M6 6.500l5-5 5 5" />
                  </Svg>
                  <Svg s={30} vb="0 0 30 30">
                    <path d="M15 3l3.400 8 8.800.8-6.600 5.800 2 8.600-7.600-4.600-7.600 4.600 2-8.600-6.600-5.800 8.800-.8z" stroke="#b9b9b9" strokeWidth="2.500" />
                  </Svg>
                </AddressActions>
              </AddressBar>
              {extensionIcons.map((icon, i) => (
                <Cell key={i}>
                  {icon}
                  {i === 2 && <Badge>10</Badge>}
                </Cell>
              ))}
            </Toolbar>

            <BookmarkBar>
              <Svg w={26} h={26} vb="0 0 26 26">
                {appDots.map((c, i) => (
                  <rect key={i} x={(i % 3) * 10} y={Math.floor(i / 3) * 10} width="6" height="6" fill={c} />
                ))}
              </Svg>
              <AppsLabel>Apps</AppsLabel>
              {bookmarkIcons.map((icon, i) => (
                <Cell key={i}>{icon}</Cell>
              ))}
              <MoreBookmarks>
                <Svg w={13} h={12} vb="0 0 13 12" stroke="#dedede" strokeWidth="2.300">
                  <path d="M1 1l4.500 5L1 11M7 1l4.500 5L7 11" />
                </Svg>
              </MoreBookmarks>
              <BarDivider />
              <Svg w={33} h={26} vb="0 0 33 26">
                <path d="M1.500 24.500V1.500h10l3 3.500h17v19.500z" stroke="#fff" strokeWidth="2.200" strokeLinejoin="round" />
                <path d="M1.500 9h30M2.500 9.500h28v14.500h-28z" stroke="#fff" strokeWidth="1.500" fill="#6b6b6b" />
              </Svg>
              <FolderLabel>Other Bookmarks</FolderLabel>
            </BookmarkBar>
          </BrowserChrome>

          <Page>
            <FormCard>
              <FormTitle>FORM TAMBAH DATA PRODUK</FormTitle>
              {fields.map((f) => (
                <Field key={f.label}>
                  <Label>{f.label}</Label>
                  <Input placeholder={f.placeholder} />
                </Field>
              ))}
              <SubmitButton type="button">Submit</SubmitButton>
            </FormCard>

            <ProductTable>
              <colgroup>
                {columns.map((c) => (
                  <Column key={c.title} $w={c.w} />
                ))}
              </colgroup>
              <thead>
                <tr>
                  {columns.map((c) => (
                    <HeadCell key={c.title}>{c.title}</HeadCell>
                  ))}
                </tr>
              </thead>
              <tbody>
                {products.map((row, r) => (
                  <tr key={row[0]}>
                    {row.map((value, c) => (
                      <BodyCell key={c} $first={r === 0} $numeric={c === 2}>
                        {value}
                      </BodyCell>
                    ))}
                  </tr>
                ))}
              </tbody>
            </ProductTable>
          </Page>
        </Window>
      </Desktop>
    </>
  );
}
